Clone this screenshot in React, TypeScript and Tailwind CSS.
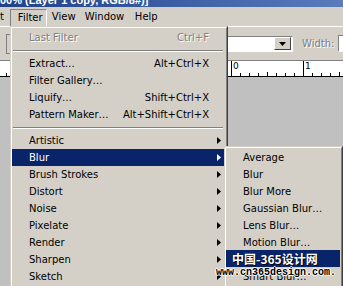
import React from 'react'

type Item =
  | { kind: 'sep' }
  | { kind: 'item'; label: string; shortcut?: string; sub?: boolean; disabled?: boolean; active?: boolean }

const filterMenu: Item[] = [
  { kind: 'item', label: 'Last Filter', shortcut: 'Ctrl+F', disabled: true },
  { kind: 'sep' },
  { kind: 'item', label: 'Extract…', shortcut: 'Alt+Ctrl+X' },
  { kind: 'item', label: 'Filter Gallery…' },
  { kind: 'item', label: 'Liquify…', shortcut: 'Shift+Ctrl+X' },
  { kind: 'item', label: 'Pattern Maker…', shortcut: 'Alt+Shift+Ctrl+X' },
  { kind: 'sep' },
  { kind: 'item', label: 'Artistic', sub: true },
  { kind: 'item', label: 'Blur', sub: true, active: true },
  { kind: 'item', label: 'Brush Strokes', sub: true },
  { kind: 'item', label: 'Distort', sub: true },
  { kind: 'item', label: 'Noise', sub: true },
  { kind: 'item', label: 'Pixelate', sub: true },
  { kind: 'item', label: 'Render', sub: true },
  { kind: 'item', label: 'Sharpen', sub: true },
  { kind: 'item', label: 'Sketch', sub: true },
  { kind: 'item', label: 'Stylize', sub: true },
]

const blurMenu = ['Average', 'Blur', 'Blur More', 'Gaussian Blur…', 'Lens Blur…', 'Motion Blur…', 'Radial Blur…', 'Smart Blur…']

function Arrow({ white }: { white?: boolean }) {
  return (
    <svg width="4" height="7" viewBox="0 0 4 7" className="ml-auto mr-[3px] shrink-0">
      <path d="M0 0L4 3.5L0 7Z" fill={white ? '#fff' : '#000'} />
    </svg>
  )
}

function MenuRow({ item }: { item: Item }) {
  if (item.kind === 'sep') {
    return (
      <div className="h-[9px] flex items-center mx-[1px]">
        <div className="w-full border-t border-b border-t-[#808080] border-b-white" />
      </div>
    )
  }
  const text = item.disabled
    ? 'text-[#808080] [text-shadow:1px_1px_0_#fff]'
    : item.active
      ? 'text-white'
      : 'text-black'
  return (
    <div className={`h-[17px] flex items-center pl-[17px] whitespace-nowrap ${item.active ? 'bg-[#0a246a]' : ''} ${text}`}>
      <span>{item.label}</span>
      {item.shortcut && <span className="ml-auto pr-[15px]">{item.shortcut}</span>}
      {item.sub && <Arrow white={item.active} />}
    </div>
  )
}

function Ruler() {
  const ticks: { x: number; h: number }[] = []
  for (let i = -25; i <= 13; i++) {
    const x = 231 + i * 9
    const m = ((i % 8) + 8) % 8
    ticks.push({ x, h: m === 0 ? 15 : m === 4 ? 4 : 3 })
  }
  return (
    <div className="h-[17px] shrink-0 border-t border-[#808080] bg-white">
      <svg width="343" height="16" className="block">
        {ticks.map((t) => (
          <line key={t.x} x1={t.x + 0.5} x2={t.x + 0.5} y1={15 - t.h} y2={15} stroke="#000" />
        ))}
        <line x1="0" x2="343" y1="15.5" y2="15.5" stroke="#000" />
        <text x="233" y="8" fontSize="9" fontFamily="DejaVu Sans, sans-serif">0</text>
        <text x="305" y="8" fontSize="9" fontFamily="DejaVu Sans, sans-serif">1</text>
      </svg>
    </div>
  )
}

export default function App() {
  return (
    <div className="relative w-[343px] h-[286px] overflow-hidden bg-[#d4d0c8] font-['DejaVu_Sans',sans-serif] text-[10px] text-black flex flex-col">
      {/* app title bar, mostly scrolled out of view */}
      <div className="h-[7px] shrink-0 overflow-hidden bg-linear-to-r from-[#20408a] to-[#5a7cbd]">
        <div className="-mt-[6px] text-[11px] leading-[12px] font-bold font-['Liberation_Sans',sans-serif] text-white whitespace-nowrap">
          00% (Layer 1 copy, RGB/8#)]
        </div>
      </div>

      {/* menu bar */}
      <div className="h-[19px] shrink-0 flex items-end whitespace-nowrap overflow-hidden">
        <span className="shrink-0 -ml-[27px] h-[17px] leading-[16px]">Select</span>
        <div className="shrink-0 ml-[6px] w-[37px] h-[17px] border-t border-l border-r border-t-[#808080] border-l-[#808080] border-r-white pl-[7px] leading-[16px]">
          Filter
        </div>
        <span className="shrink-0 ml-[5px] w-[33px] h-[17px] leading-[16px]">View</span>
        <span className="shrink-0 w-[50px] h-[17px] leading-[16px]">Window</span>
        <span className="shrink-0 h-[17px] leading-[16px]">Help</span>
      </div>

      {/* options bar */}
      <div className="h-[34px] shrink-0 border-t border-white flex items-center whitespace-nowrap overflow-hidden">
        <div className="shrink-0 ml-[6px] w-[20px] h-[20px] border border-[#808080]" />
        <div className="shrink-0 ml-[124px] w-[143px] h-[16px] border border-t-[#808080] border-l-[#808080] border-b-white border-r-white bg-white flex items-center justify-end pr-[1px]">
          <div className="w-[17px] h-[13px] bg-[#d4d0c8] border border-t-white border-l-white border-r-[#404040] border-b-[#404040] flex items-center justify-center">
            <svg width="7" height="4" viewBox="0 0 7 4">
              <path d="M0 0H7L3.5 4Z" fill="#000" />
            </svg>
          </div>
        </div>
        <span className="shrink-0 ml-[9px] w-[36px] text-[#808080] [text-shadow:1px_1px_0_#fff]">Width:</span>
        <div className="shrink-0 w-[40px] h-[17px] border border-t-[#808080] border-l-[#808080] border-b-white border-r-white bg-white" />
      </div>

      <Ruler />
      <div className="flex-1 bg-[#c0c0c0]" />

      {/* Filter menu */}
      <div className="absolute left-[10px] top-[26px] w-[218px] h-[275px] border border-t-[#d4d0c8] border-l-[#d4d0c8] border-r-[#404040] border-b-[#404040] bg-[#d4d0c8]">
        <div className="h-full border border-t-white border-l-white border-r-[#808080] border-b-[#808080] pt-[1px] pr-[2px]">
          {filterMenu.map((item, i) => (
            <MenuRow key={i} item={item} />
          ))}
        </div>
      </div>

      {/* Blur submenu */}
      <div className="absolute left-[224px] top-[146px] w-[119px] h-[150px] border border-t-[#d4d0c8] border-l-[#d4d0c8] border-r-[#404040] border-b-[#404040] bg-[#d4d0c8]">
        <div className="h-full border border-t-white border-l-white border-r-[#808080] border-b-[#808080] pt-[1px] pr-[1px]">
          {blurMenu.map((label) => (
            <div key={label} className="h-[17px] flex items-center pl-[17px] whitespace-nowrap">
              {label}
            </div>
          ))}
        </div>
      </div>

      {/* watermark */}
      <div className="absolute left-[226px] top-[250px] w-[114px] h-[17px] bg-[#0a246a] pl-[6px] flex items-center text-[12px] font-bold text-white font-['Noto_Sans_CJK_SC',sans-serif] whitespace-nowrap [text-shadow:1px_1px_0_#000]">
        中国-365设计网
      </div>
      <div className="absolute left-[216px] top-[267px] text-[10px] leading-[12px] font-bold font-['Liberation_Mono',monospace] text-black whitespace-nowrap [text-shadow:1px_0_0_#fff,-1px_0_0_#fff,0_1px_0_#fff,0_-1px_0_#fff]">
        www.cn365design.com.
      </div>
    </div>
  )
}
